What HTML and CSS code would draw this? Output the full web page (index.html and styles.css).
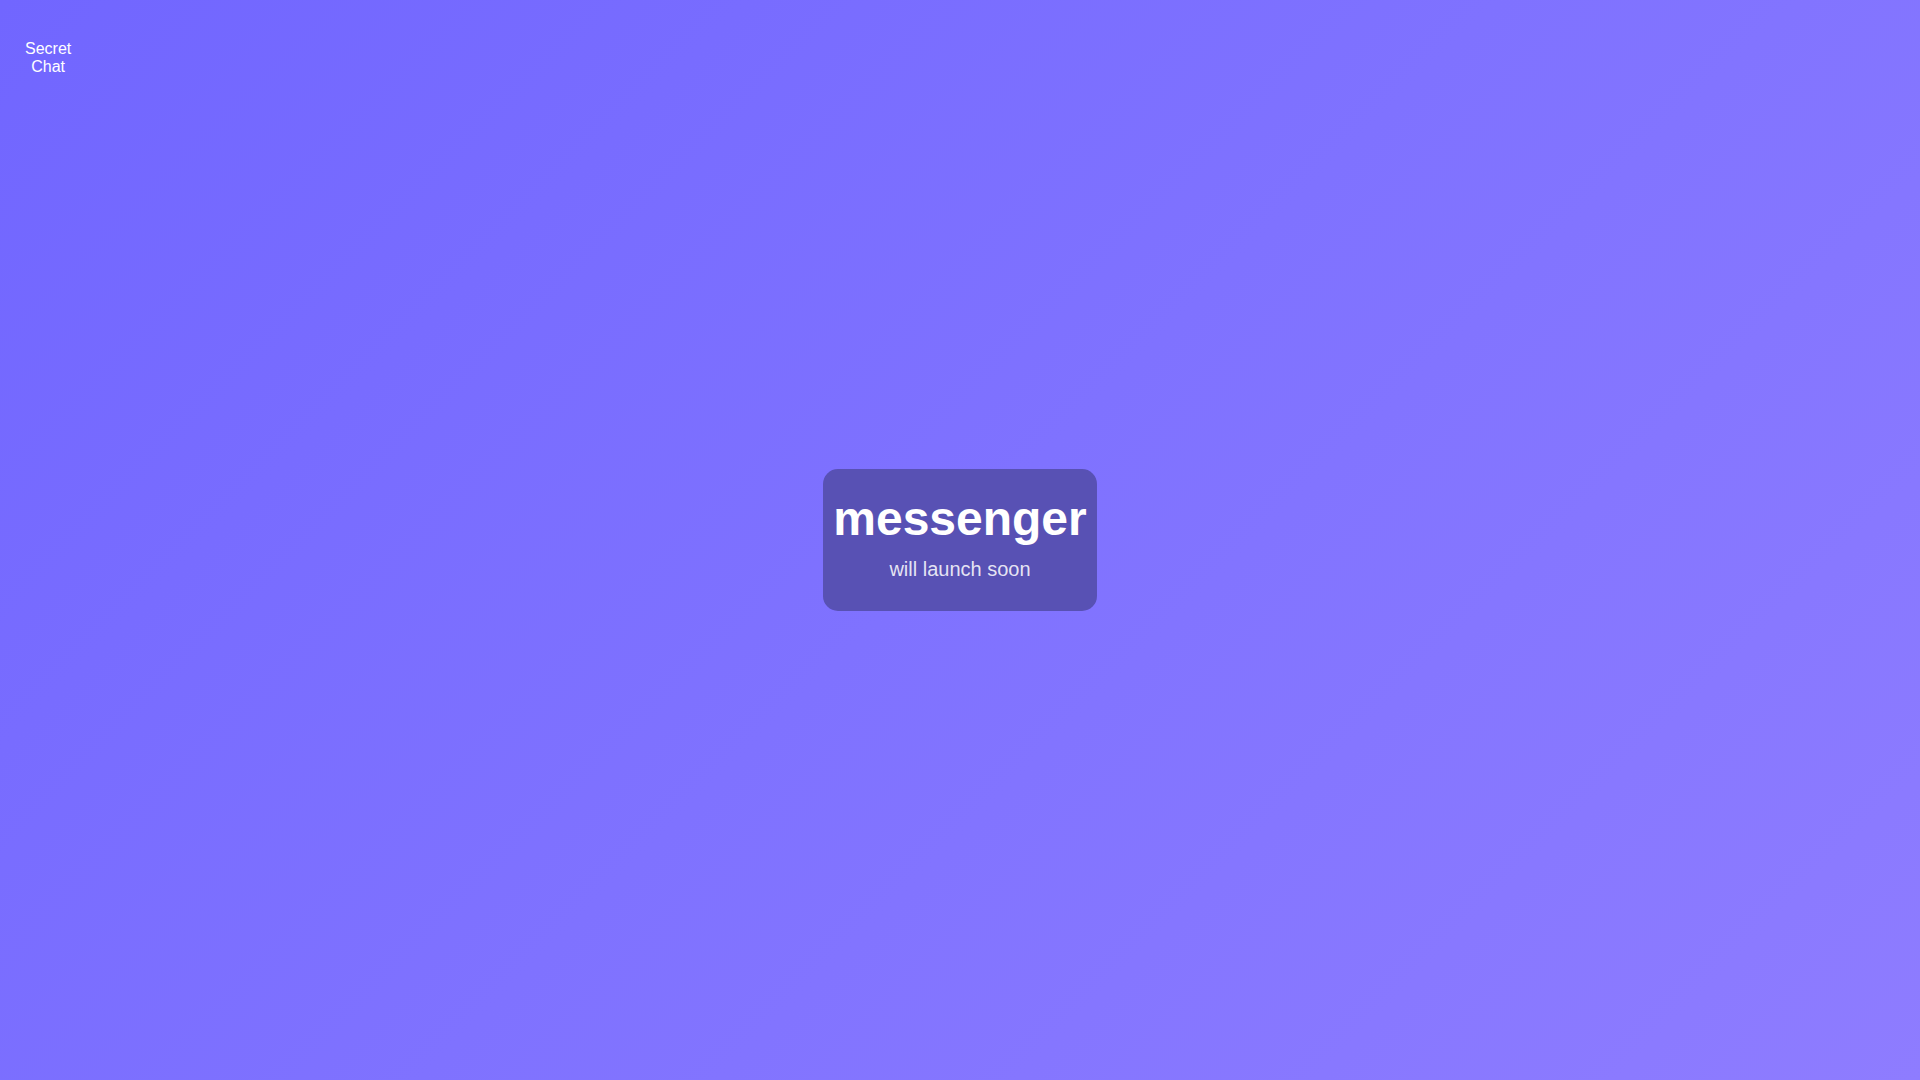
FILE: index.html
```html
<!DOCTYPE html>
<html lang="en">
<head>
<meta charset="utf-8">
<title>Secret Chat</title>
<link rel="stylesheet" href="styles.css">
</head>
<body>
<div class="logo">Secret Chat</div>
<main class="stage">
  <div class="card">
    <h1 class="title">messenger</h1>
    <p class="subtitle">will launch soon</p>
  </div>
</main>
</body>
</html>
```

FILE: styles.css
```css
html, body {
  margin: 0;
  padding: 0;
  height: 100%;
}
body {
  font-family: "Liberation Sans", Arial, sans-serif;
  background: linear-gradient(135deg, #7166ff 0%, #7f72ff 50%, #8e7cff 100%);
  color: #ffffff;
  overflow: hidden;
}
.logo {
  position: absolute;
  top: 40px;
  left: 25px;
  width: min-content;
  font-size: 16px;
  text-align: center;
  color: #ffffff;
}
.stage {
  height: 100vh;
  display: flex;
  align-items: center;
  justify-content: center;
}
.card {
  background: #5851b4;
  border-radius: 15px;
  padding: 22px 10px 20px;
  text-align: center;
}
.title {
  margin: 0;
  font-size: 48px;
  font-weight: 700;
  line-height: normal;
  color: #ffffff;
}
.subtitle {
  margin: 12px 0 10px;
  font-size: 20px;
  color: rgba(255, 255, 255, 0.86);
}
```
